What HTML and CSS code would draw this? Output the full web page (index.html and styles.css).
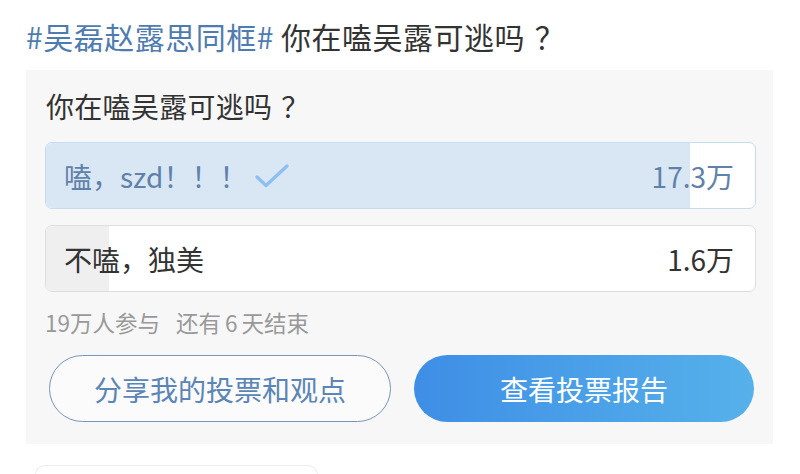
FILE: index.html
```html
<!DOCTYPE html>
<html lang="zh">
<head>
<meta charset="utf-8">
<link rel="stylesheet" href="styles.css">
</head>
<body>
<div class="title"><span class="tag">#吴磊赵露思同框#</span> 你在嗑吴露可逃吗<span class="qm">？</span></div>
<div class="card">
  <div class="question">你在嗑吴露可逃吗<span class="qm">？</span></div>
  <div class="option chosen">
    <div class="fill" style="width: 90.8%"></div>
    <div class="opt-label">嗑，szd！！！<svg class="check" viewBox="0 0 36 26" width="36" height="26"><path d="M3 14 L12 22.5 L33 3" fill="none" stroke="#8dc0f0" stroke-width="3.4" stroke-linecap="round" stroke-linejoin="round"/></svg></div>
    <div class="opt-count">17.3万</div>
  </div>
  <div class="option">
    <div class="fill" style="width: 8.9%"></div>
    <div class="opt-label">不嗑，独美</div>
    <div class="opt-count">1.6万</div>
  </div>
  <div class="meta">19万人参与<span class="sep"></span>还有<span class="num">6</span>天结束</div>
  <div class="actions">
    <div class="btn btn-outline">分享我的投票和观点</div>
    <div class="btn btn-solid">查看投票报告</div>
  </div>
</div>
<div class="below"></div>
</body>
</html>
```

FILE: styles.css
```css
html, body {
  margin: 0;
  padding: 0;
  background: #ffffff;
  font-family: "Noto Sans CJK SC", "Noto Sans", sans-serif;
  overflow: hidden;
  text-spacing-trim: space-all;
}
.qm {
  display: inline-block;
  width: 1em;
  box-sizing: border-box;
  padding-left: 0.32em;
  text-align: left;
}
.title {
  padding: 15px 0 0 26px;
  height: 70px;
  box-sizing: border-box;
  font-size: 30px;
  line-height: 42px;
  color: #333333;
  white-space: nowrap;
  letter-spacing: 0.5px;
}
.tag {
  color: #4f7cb0;
}
.card {
  margin: 0 27px 0 26px;
  background: #f7f7f7;
  padding: 17px 17px 22px 19px;
  height: 374px;
  box-sizing: border-box;
  display: flex;
  flex-direction: column;
}
.question {
  font-size: 28px;
  line-height: 38px;
  color: #333333;
  padding-left: 1px;
  height: 55px;
  letter-spacing: 0.3px;
  white-space: nowrap;
}
.option {
  position: relative;
  height: 67px;
  box-sizing: border-box;
  border: 1px solid #dedede;
  border-radius: 7px;
  background: #ffffff;
  display: flex;
  align-items: center;
  justify-content: space-between;
  padding: 0 21px 0 18px;
  overflow: hidden;
  margin-bottom: 16px;
  font-size: 28px;
  color: #333333;
}
.option .fill {
  position: absolute;
  left: 0;
  top: 0;
  bottom: 0;
  background: #efefef;
}
.option.chosen {
  border-color: #c6dbf0;
  color: #5f81aa;
}
.option.chosen .fill {
  background: #d9e7f5;
}
.opt-label, .opt-count {
  position: relative;
  display: flex;
  align-items: center;
  white-space: nowrap;
}
.check {
  margin-left: 7px;
}
.meta {
  margin-top: -1px;
  font-size: 22.5px;
  line-height: 30px;
  color: #999999;
  height: 36px;
  white-space: nowrap;
}
.sep {
  display: inline-block;
  width: 16px;
}
.num {
  margin: 0 4px;
}
.actions {
  display: flex;
  gap: 23px;
  padding: 0 2px 0 4px;
  margin-top: auto;
}
.btn {
  flex: 1;
  height: 67px;
  box-sizing: border-box;
  border-radius: 34px;
  display: flex;
  align-items: center;
  justify-content: center;
  font-size: 28px;
  white-space: nowrap;
}
.btn-outline {
  border: 1px solid #7896bb;
  color: #5a85b6;
  background: #fbfbfb;
}
.btn-solid {
  background: linear-gradient(90deg, #3e8ee6, #56b1ea);
  color: #ffffff;
}
.below {
  margin: 21px 0 0 35px;
  width: 281px;
  height: 9px;
  border: 1px solid #ececec;
  border-bottom: none;
  border-radius: 22px 22px 0 0;
}
```
